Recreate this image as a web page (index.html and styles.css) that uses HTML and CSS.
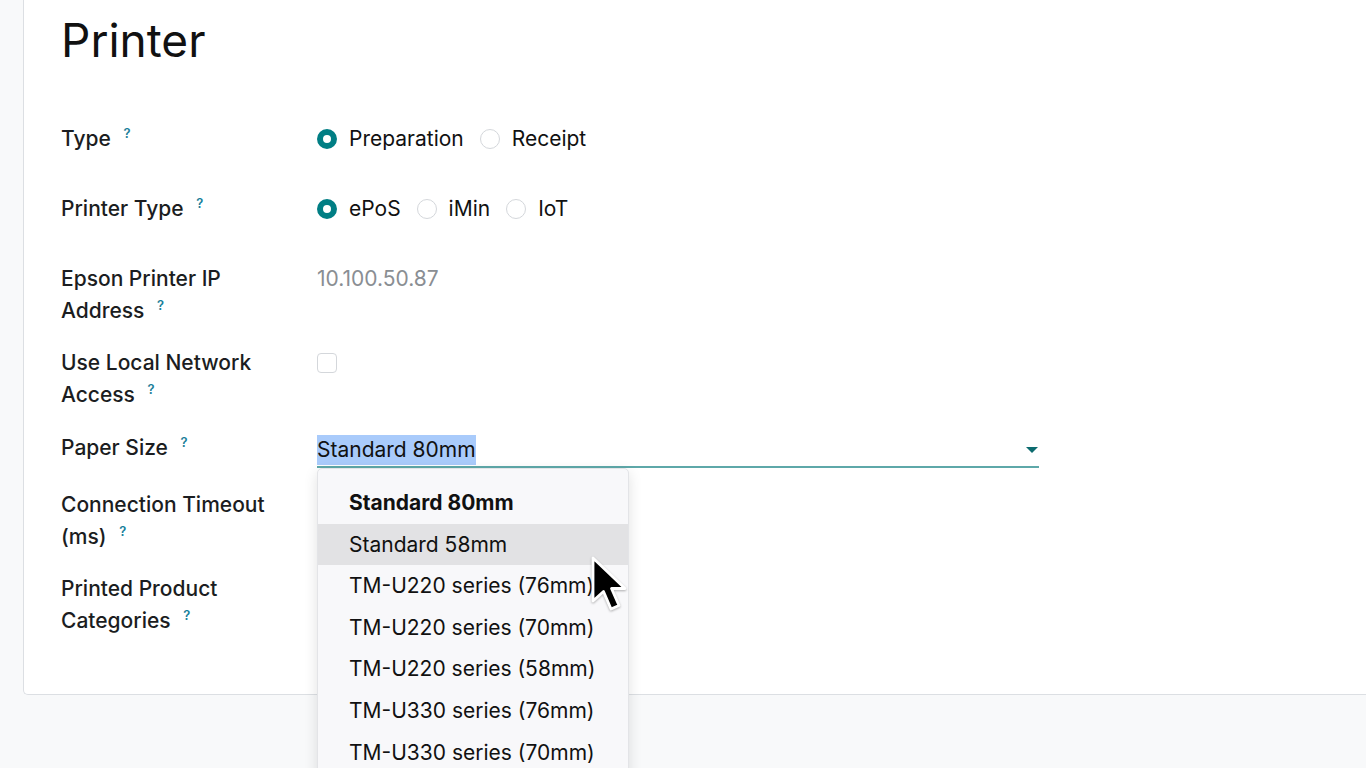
FILE: index.html
```html
<!DOCTYPE html>
<html lang="en">
<head>
    <meta charset="UTF-8">
    <title>Printer</title>
    <link rel="stylesheet" href="styles.css">
</head>
<body>
    <div class="sheet">
        <h1 class="title">Printer</h1>

        <div class="row">
            <div class="label">Type <sup class="help">?</sup></div>
            <div class="value radios">
                <label class="radio"><span class="dot checked"></span>Preparation</label>
                <label class="radio"><span class="dot"></span>Receipt</label>
            </div>
        </div>

        <div class="row">
            <div class="label">Printer Type <sup class="help">?</sup></div>
            <div class="value radios">
                <label class="radio"><span class="dot checked"></span>ePoS</label>
                <label class="radio"><span class="dot"></span>iMin</label>
                <label class="radio"><span class="dot"></span>IoT</label>
            </div>
        </div>

        <div class="row">
            <div class="label">Epson Printer IP<br>Address <sup class="help">?</sup></div>
            <div class="value muted">10.100.50.87</div>
        </div>

        <div class="row tall">
            <div class="label">Use Local Network<br>Access <sup class="help">?</sup></div>
            <div class="value"><span class="checkbox"></span></div>
        </div>

        <div class="row">
            <div class="label">Paper Size <sup class="help">?</sup></div>
            <div class="value">
                <div class="select">
                    <span class="selected">Standard 80mm</span>
                    <span class="caret"></span>
                    <ul class="options">
                        <li class="current">Standard 80mm</li>
                        <li class="hover">Standard 58mm</li>
                        <li>TM-U220 series (76mm)</li>
                        <li>TM-U220 series (70mm)</li>
                        <li>TM-U220 series (58mm)</li>
                        <li>TM-U330 series (76mm)</li>
                        <li>TM-U330 series (70mm)</li>
                    </ul>
                    <svg class="pointer" width="40" height="58" viewBox="0 0 40 58">
                        <path d="M2 2 L2 45 L12.5 35.5 L20 53 L28 49.5 L20.5 32.5 L34 32.5 Z" fill="#000" stroke="#fff" stroke-width="2.8" stroke-linejoin="round"/>
                    </svg>
                </div>
            </div>
        </div>

        <div class="row">
            <div class="label">Connection Timeout<br>(ms) <sup class="help">?</sup></div>
            <div class="value"></div>
        </div>

        <div class="row last">
            <div class="label">Printed Product<br>Categories <sup class="help">?</sup></div>
            <div class="value"></div>
        </div>
    </div>
</body>
</html>
```

FILE: styles.css
```css
body {
    margin: 0;
    padding: 0 0 0 23px;
    background: #f8f9fa;
    font-family: Inter, "Noto Sans", sans-serif;
    font-size: 21px;
    color: #111;
    height: 768px;
    overflow: hidden;
}
.sheet {
    background: #fff;
    border: 1px solid #dcdfe3;
    border-top: none;
    border-right: none;
    border-bottom-left-radius: 5px;
    padding: 10px 0 57px 37px;
}
.title {
    font-size: 46px;
    font-weight: 400;
    line-height: 60px;
    margin: 0 0 53px;
    color: #111;
}
.row {
    display: grid;
    grid-template-columns: 256px 1fr;
    padding-bottom: 20px;
}
.row.tall {
    padding-bottom: 21px;
}
.row.last {
    padding-bottom: 0;
}
.label {
    font-weight: 500;
    line-height: 32px;
    color: #1b1d21;
}
.help {
    color: #1a7f9a;
    font-size: 13px;
    font-weight: 600;
    vertical-align: top;
    position: relative;
    top: -6px;
    margin-left: 7px;
}
.value {
    line-height: 32px;
    min-height: 32px;
}
.radios {
    display: flex;
    gap: 16px;
    min-height: 50px;
}
.radio {
    display: flex;
    align-items: flex-start;
    gap: 12px;
}
.dot {
    width: 20px;
    height: 20px;
    box-sizing: border-box;
    border-radius: 50%;
    border: 1px solid #d4d7db;
    margin-top: 6px;
    background: #fff;
}
.dot.checked {
    border: 6.5px solid #017e84;
}
.muted {
    color: #8a8e93;
}
.checkbox {
    display: block;
    width: 20px;
    height: 20px;
    box-sizing: border-box;
    border: 1px solid #d4d7db;
    border-radius: 4px;
    margin-top: 6px;
}
.select {
    position: relative;
    width: 722px;
    height: 32px;
    border-bottom: 2px solid #5ea8a9;
    margin: 2px 0 1px;
}
.selected {
    background: #a9cbfb;
    line-height: 30px;
    display: inline-block;
}
.caret {
    position: absolute;
    right: 1px;
    top: 13px;
    border-left: 6px solid transparent;
    border-right: 6px solid transparent;
    border-top: 6px solid #0c6b6f;
}
.options {
    position: absolute;
    left: 0;
    top: 34px;
    width: 310px;
    margin: 0;
    padding: 13px 0 20px;
    list-style: none;
    background: #f8f8fa;
    border: 1px solid #e3e4e7;
    border-radius: 5px;
    box-shadow: 0 4px 14px rgba(0, 0, 0, 0.12);
    z-index: 2;
}
.options li {
    height: 41.6px;
    line-height: 41.6px;
    padding-left: 31px;
    white-space: nowrap;
}
.options li.current {
    font-weight: 700;
}
.options li.hover {
    background: #e2e2e4;
}
.pointer {
    position: absolute;
    left: 274px;
    top: 122px;
    z-index: 3;
    filter: drop-shadow(0 1px 1px rgba(0, 0, 0, 0.3));
}
```
